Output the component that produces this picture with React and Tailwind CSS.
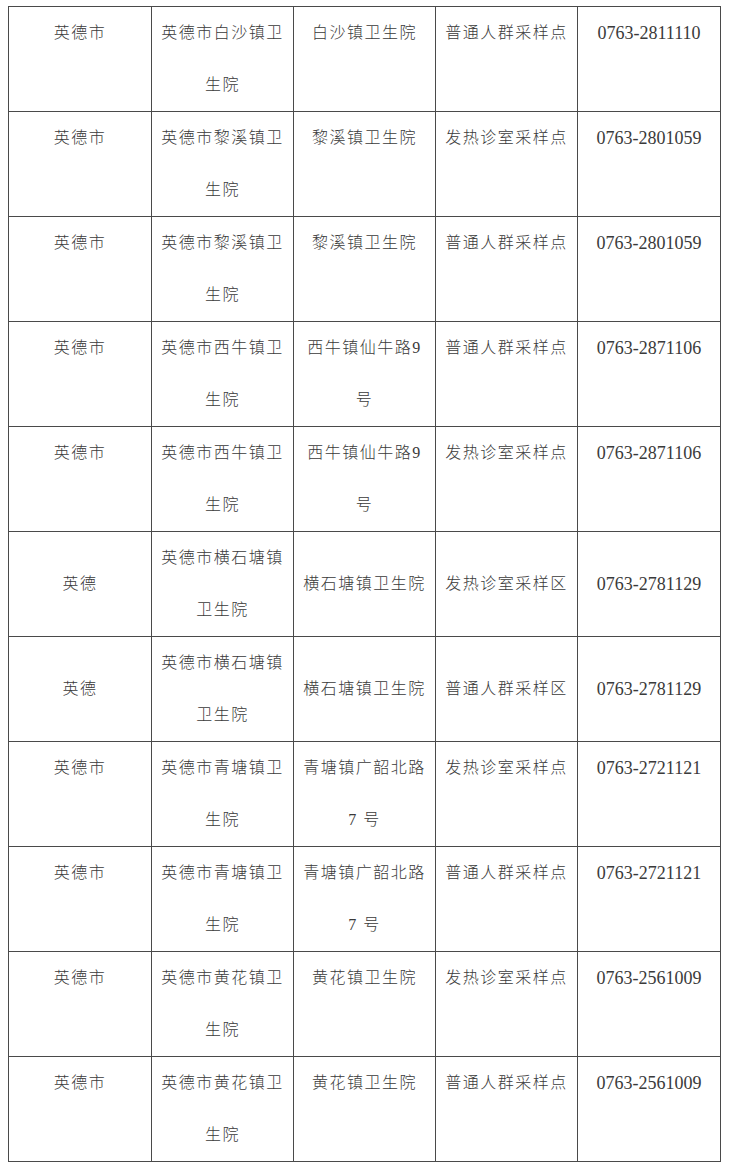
const rows = [
  { a: ["英德市"], b: ["英德市白沙镇卫", "生院"], c: ["白沙镇卫生院"], d: "普通人群采样点", e: "0763-2811110" },
  { a: ["英德市"], b: ["英德市黎溪镇卫", "生院"], c: ["黎溪镇卫生院"], d: "发热诊室采样点", e: "0763-2801059" },
  { a: ["英德市"], b: ["英德市黎溪镇卫", "生院"], c: ["黎溪镇卫生院"], d: "普通人群采样点", e: "0763-2801059" },
  { a: ["英德市"], b: ["英德市西牛镇卫", "生院"], c: ["西牛镇仙牛路9", "号"], d: "普通人群采样点", e: "0763-2871106" },
  { a: ["英德市"], b: ["英德市西牛镇卫", "生院"], c: ["西牛镇仙牛路9", "号"], d: "发热诊室采样点", e: "0763-2871106" },
  { a: ["英德"], b: ["英德市横石塘镇", "卫生院"], c: ["横石塘镇卫生院"], d: "发热诊室采样区", e: "0763-2781129", mid: true },
  { a: ["英德"], b: ["英德市横石塘镇", "卫生院"], c: ["横石塘镇卫生院"], d: "普通人群采样区", e: "0763-2781129", mid: true },
  { a: ["英德市"], b: ["英德市青塘镇卫", "生院"], c: ["青塘镇广韶北路", "7 号"], d: "发热诊室采样点", e: "0763-2721121" },
  { a: ["英德市"], b: ["英德市青塘镇卫", "生院"], c: ["青塘镇广韶北路", "7 号"], d: "普通人群采样点", e: "0763-2721121" },
  { a: ["英德市"], b: ["英德市黄花镇卫", "生院"], c: ["黄花镇卫生院"], d: "发热诊室采样点", e: "0763-2561009" },
  { a: ["英德市"], b: ["英德市黄花镇卫", "生院"], c: ["黄花镇卫生院"], d: "普通人群采样点", e: "0763-2561009" },
];

function Cell({ lines, mid }) {
  return (
    <td
      className={`border border-[#4a4a4a] p-0 text-center leading-[52px] tracking-[1.5px] ${
        mid ? "align-middle" : "align-top"
      }`}
    >
      {lines.map((l, i) => (
        <div key={i}>{l}</div>
      ))}
    </td>
  );
}

export default function App() {
  return (
    <div
      className="min-h-screen bg-white pt-[6px] pl-[8px] text-[#3a3a3a] text-[16px] font-light"
      style={{ fontFamily: '"Liberation Serif", "Noto Sans CJK SC", serif' }}
    >
      <table className="w-[712px] table-fixed border-collapse">
        <colgroup>
          <col className="w-[143px]" />
          <col className="w-[142px]" />
          <col className="w-[142px]" />
          <col className="w-[142px]" />
          <col className="w-[143px]" />
        </colgroup>
        <tbody>
          {rows.map((r, i) => (
            <tr key={i} className="h-[105px]">
              <Cell lines={r.a} mid={r.mid} />
              <Cell lines={r.b} mid={r.mid} />
              <Cell lines={r.c} mid={r.mid} />
              <Cell lines={[r.d]} mid={r.mid} />
              <td
                className={`border border-[#4a4a4a] p-0 text-center leading-[52px] text-[18px] font-normal ${
                  r.mid ? "align-middle" : "align-top"
                }`}
              >
                {r.e}
              </td>
            </tr>
          ))}
        </tbody>
      </table>
    </div>
  );
}
